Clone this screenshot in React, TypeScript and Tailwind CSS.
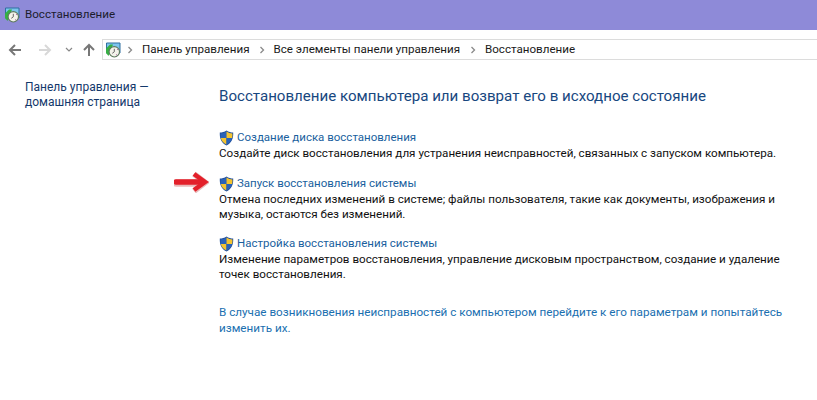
const font = "font-['Roboto',sans-serif]";

function CpIcon() {
  return (
    <svg width="16" height="16" viewBox="0 0 16 16" className="shrink-0">
      <path d="M1.500 1h13.500v10H1.500z" fill="#7cc4ee" stroke="#2f6f9f" strokeWidth="1" />
      <path d="M1 6.500 5 2.500h3L3.500 14 1 11z" fill="#35b044" />
      <circle cx="9.300" cy="9.800" r="5.200" fill="#f3f3ea" stroke="#5d7a5d" strokeWidth="1.100" />
      <path d="M9.300 6.800v3l-2 1.500" fill="none" stroke="#666" strokeWidth="1" />
      <path d="M12 7l1 1M11 12.500l1 .5" stroke="#b04ca0" strokeWidth="0.800" />
    </svg>
  );
}

function Shield() {
  return (
    <svg width="15" height="16" viewBox="0 0 15 16" className="shrink-0">
      <path d="M7.500.5C9.500 2 12 2.600 14.200 2.600c.3 6-1.500 10.400-6.700 12.900C2.300 13 .5 8.600.8 2.600 3 2.600 5.500 2 7.500.5z" fill="#1f4f9c" />
      <path d="M7.500 1.500V8H1.600C1.500 6.300 1.500 4.800 1.600 3.400 3.500 3.300 5.800 2.800 7.500 1.500z" fill="#2a62b8" />
      <path d="M7.500 1.500c1.700 1.300 4 1.800 5.900 1.900.1 1.600 0 3.200-.3 4.600H7.500z" fill="#f4c430" />
      <path d="M7.500 8v6.500C4.300 13 2.400 10.800 1.800 8z" fill="#f4c430" />
      <path d="M7.500 8h5.600c-.7 2.900-2.500 5-5.600 6.500z" fill="#2a62b8" />
    </svg>
  );
}

function Arrow({ d, color }: { d: string; color: string }) {
  return (
    <svg width="14" height="14" viewBox="0 0 14 14" className="shrink-0">
      <path d={d} fill="none" stroke={color} strokeWidth="2" />
    </svg>
  );
}

function Chevron() {
  return (
    <svg width="6" height="8" viewBox="0 0 6 8" className="shrink-0">
      <path d="M1.500 1l3 3-3 3" fill="none" stroke="#8a8a8a" strokeWidth="1.300" />
    </svg>
  );
}

function Task({ title, children, arrow }: { title: string; children: React.ReactNode; arrow?: boolean }) {
  return (
    <div className="relative">
      {arrow && (
        <svg width="35" height="22" viewBox="0 0 35 22" className="absolute left-[-45px] top-[-5px]">
          <path d="M2 12h26" stroke="#e9b9b9" strokeWidth="7.500" strokeLinecap="round" />
          <path d="M20 3l11 8.500L20 20" fill="none" stroke="#e9b9b9" strokeWidth="6" />
          <path d="M2 11h26" stroke="#e3202a" strokeWidth="5.500" strokeLinecap="round" />
          <path d="M20 3l11 8L20 19" fill="none" stroke="#e3202a" strokeWidth="4.500" />
        </svg>
      )}
      <div className="flex items-center gap-[3px] h-[16px]">
        <Shield />
        <span className="text-[11.5px] text-[#1a5f9e]">{title}</span>
      </div>
      <p className="text-[11.65px] leading-[15px] text-[#111] whitespace-nowrap">{children}</p>
    </div>
  );
}

export default function App() {
  return (
    <div className={`${font} w-[817px] h-[400px] bg-white overflow-hidden`}>
      <div className="h-[30px] bg-[#8e8ad8] flex items-center pl-[4px] gap-[5px]">
        <CpIcon />
        <span className="text-[11.6px] text-[#1c1c2e]">Восстановление</span>
      </div>
      <div className="h-[27px] mt-[6px] flex items-center pl-[8px]">
        <Arrow d="M13 7H2M7 2 2 7l5 5" color="#777" />
        <div className="w-[16px]" />
        <Arrow d="M1 7h11M7 2l5 5-5 5" color="#d8d8d8" />
        <svg width="8" height="6" viewBox="0 0 8 6" className="ml-[13px]"><path d="M1 1l3 3 3-3" fill="none" stroke="#888" strokeWidth="1.200" /></svg>
        <div className="w-[9px]" />
        <Arrow d="M7 13V2M2 7l5-5 5 5" color="#777" />
        <div className="ml-[6px] flex-1 h-[21px] border-y border-l border-[#dcdcdc] flex items-center pl-[2px]">
          <CpIcon />
          <div className="ml-[6px]"><Chevron /></div>
          <span className="ml-[9px] text-[11.6px] text-[#1a1a1a]">Панель управления</span>
          <div className="ml-[9px]"><Chevron /></div>
          <span className="ml-[9px] text-[11.6px] text-[#1a1a1a]">Все элементы панели управления</span>
          <div className="ml-[10px]"><Chevron /></div>
          <span className="ml-[9px] text-[11.6px] text-[#1a1a1a]">Восстановление</span>
        </div>
      </div>
      <div className="flex mt-[17px]">
        <div className="w-[219px] shrink-0 pl-[25px] text-[12px] leading-[15px] text-[#14386b]">
          Панель управления —<br />домашняя страница
        </div>
        <div className="w-[590px] pt-[6px]">
          <h1 className="text-[15.1px] leading-[20px] font-normal text-[#17477f]">
            Восстановление компьютера или возврат его в исходное состояние
          </h1>
          <div className="mt-[24px] flex flex-col gap-[14.5px]">
            <Task title="Создание диска восстановления">
              Создайте диск восстановления для устранения неисправностей, связанных с запуском компьютера.
            </Task>
            <Task title="Запуск восстановления системы" arrow>
              Отмена последних изменений в системе; файлы пользователя, такие как документы, изображения и<br />музыка, остаются без изменений.
            </Task>
            <Task title="Настройка восстановления системы">
              Изменение параметров восстановления, управление дисковым пространством, создание и удаление<br />точек восстановления.
            </Task>
          </div>
          <p className="mt-[22px] text-[11.7px] leading-[16px] text-[#1a6fb0] whitespace-nowrap">
            В случае возникновения неисправностей с компьютером перейдите к его параметрам и попытайтесь<br />изменить их.
          </p>
        </div>
      </div>
    </div>
  );
}
